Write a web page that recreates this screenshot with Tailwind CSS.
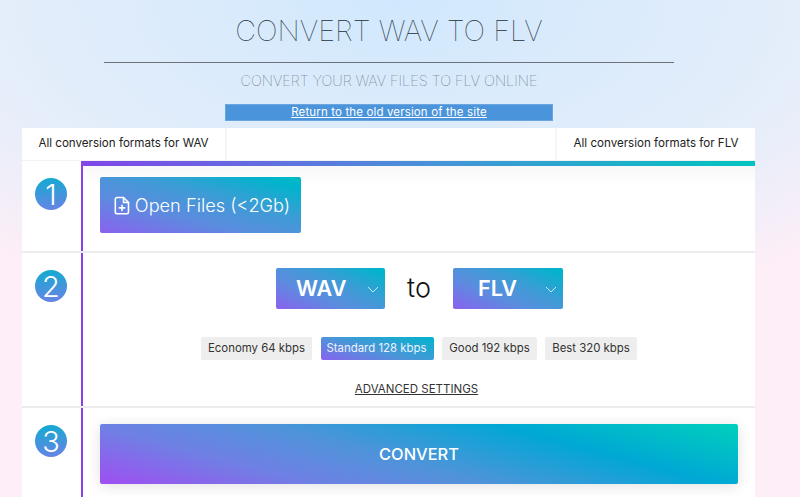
<!DOCTYPE html>
<html lang="en">

<head>
    <meta charset="UTF-8">
    <meta name="viewport" content="width=device-width, initial-scale=1.0">
    <title>Convert WAV to FLV</title>
    <script src="https://cdn.jsdelivr.net/npm/@tailwindcss/browser@4"></script>
</head>

<body class="h-[497px] overflow-hidden bg-[#fdf3f9] bg-[radial-gradient(ellipse_620px_330px_at_50%_0,#d0e8fd_0%,#e6eefa_70%,#fdeef7_100%)] bg-no-repeat font-['Inter','Liberation_Sans',sans-serif]">
    <div class="w-[800px]">
        <!-- Header -->
        <header class="flex w-[778px] flex-col items-center pt-[13px]">
            <h1 class="h-[36px] text-[28.8px] leading-[36px] font-thin text-[#25303a]">CONVERT WAV TO FLV</h1>
            <div class="mt-[13px] h-px w-[570px] bg-[#6b7378]"></div>
            <p class="mt-[9px] h-[18px] text-[14.5px] leading-[18px] font-thin text-[#3c474f]">CONVERT YOUR WAV FILES TO FLV ONLINE</p>
            <div class="mt-[14px] flex h-[17px] w-[328px] items-center justify-center border border-[#6aa5e0] bg-[#4a94db]">
                <a href="#" class="text-[11.5px] leading-[15px] tracking-[0.14px] text-white underline">Return to the old version of the site</a>
            </div>
        </header>

        <!-- Converter card -->
        <main class="mt-[7px] ml-[22px] w-[733px] bg-white">
            <div class="flex h-[33px] items-center justify-between border-b border-[#f2f2f2] text-[11.6px] text-[#222]">
                <a href="#" class="flex h-full w-[205px] items-center justify-center border-r-2 border-[#f5f5f5]">All conversion formats for WAV</a>
                <a href="#" class="flex h-full w-[200px] items-center justify-center border-l-2 border-[#f5f5f5]">All conversion formats for FLV</a>
            </div>

            <!-- Step 1 -->
            <section class="flex h-[92px] border-b-2 border-[#ececec]">
                <div class="flex w-[59px] shrink-0 justify-center pt-[17px] pr-[1px]">
                    <span class="flex h-[32px] w-[32px] items-center justify-center rounded-full bg-[linear-gradient(175deg,#10acd0,#6a82e6)] text-[29px] leading-none font-light text-white">1</span>
                </div>
                <div class="flex-1 border-l-2 border-[#8a40ea]">
                    <div class="h-[5px] bg-[linear-gradient(90deg,#8046e8,#4a90d9_50%,#00c4c0)]"></div>
                    <div class="bg-[linear-gradient(#f8f8f8,#ffffff_18px)] pt-[11px] pl-[17px]">
                        <button class="flex h-[56px] w-[201px] items-center justify-center gap-[5px] rounded-[2px] bg-[linear-gradient(15deg,#8a62ee_0%,#5b8cdf_35%,#3f9bd6_60%,#00b4cc_90%,#00bcc4_100%)] pt-px pl-[3px] text-[18.2px] font-light text-white">
                            <svg width="16" height="19" viewBox="0 0 16 19" fill="none" stroke="white" stroke-width="1.6" stroke-linejoin="round" stroke-linecap="round">
                                <path d="M3 1.5h6.5l5 5v9.5a1.7 1.7 0 0 1-1.7 1.7H3A1.7 1.7 0 0 1 1.3 16V3.2A1.7 1.7 0 0 1 3 1.5z" />
                                <path d="M9.5 1.5v5h5" />
                                <path d="M8 9.2v5.4M5.3 11.9h5.4" />
                            </svg>
                            Open Files (&lt;2Gb)
                        </button>
                    </div>
                </div>
            </section>

            <!-- Step 2 -->
            <section class="flex h-[155px] border-b-2 border-[#ececec]">
                <div class="flex w-[59px] shrink-0 justify-center pt-[17px] pr-[1px]">
                    <span class="flex h-[32px] w-[32px] items-center justify-center rounded-full bg-[linear-gradient(175deg,#10acd0,#6a82e6)] text-[29px] leading-none font-light text-white">2</span>
                </div>
                <div class="flex flex-1 flex-col items-center border-l-2 border-[#8a40ea] pt-[15px]">
                    <div class="flex items-center">
                        <button class="relative ml-px flex h-[41px] w-[109px] items-center rounded-[2px] bg-[linear-gradient(25deg,#8a62ee_0%,#5b8cdf_35%,#3f9bd6_60%,#00b4cc_95%)] pl-[20px] text-[21.6px] font-semibold text-white">
                            WAV
                            <svg class="absolute top-[18px] right-[6px]" width="12" height="7" viewBox="0 0 12 7" fill="none" stroke="#cfe4f7" stroke-width="1"><path d="M1 1l5 5 5-5" /></svg>
                        </button>
                        <span class="w-[68px] text-center text-[27px] font-light text-[#111]">to</span>
                        <button class="relative flex h-[41px] w-[110px] items-center rounded-[2px] bg-[linear-gradient(25deg,#8a62ee_0%,#5b8cdf_35%,#3f9bd6_60%,#00b4cc_95%)] pl-[25px] text-[21.6px] font-semibold text-white">
                            FLV
                            <svg class="absolute top-[18px] right-[6px]" width="12" height="7" viewBox="0 0 12 7" fill="none" stroke="#cfe4f7" stroke-width="1"><path d="M1 1l5 5 5-5" /></svg>
                        </button>
                    </div>
                    <div class="mt-[28px] flex gap-[8px] text-[11.4px] leading-[23px] text-[#333]">
                        <button class="mr-px h-[23px] w-[111px] rounded-[2px] bg-[#eeeeee]">Economy 64 kbps</button>
                        <button class="h-[23px] w-[113px] rounded-[2px] bg-[linear-gradient(15deg,#8a62ee_0%,#4b95d9_45%,#00b4cc_100%)] pr-[2px] text-[#eef4ff]">Standard 128 kbps</button>
                        <button class="h-[23px] w-[95px] rounded-[2px] bg-[#eeeeee]">Good 192 kbps</button>
                        <button class="h-[23px] w-[92px] rounded-[2px] bg-[#eeeeee]">Best 320 kbps</button>
                    </div>
                    <a href="#" class="mt-[22px] mr-[5px] text-[11.5px] leading-[15px] text-[#333] underline">ADVANCED SETTINGS</a>
                </div>
            </section>

            <!-- Step 3 -->
            <section class="flex h-[90px]">
                <div class="flex w-[59px] shrink-0 justify-center pt-[17px] pr-[1px]">
                    <span class="flex h-[32px] w-[32px] items-center justify-center rounded-full bg-[linear-gradient(175deg,#10acd0,#6a82e6)] text-[29px] leading-none font-light text-white">3</span>
                </div>
                <div class="flex-1 border-l-2 border-[#8a40ea] pt-[16px] pl-[17px]">
                    <button class="h-[60px] w-[638px] rounded-[2px] bg-[linear-gradient(15deg,#a04ef2_0%,#6f80e4_25%,#4f93da_45%,#00a8d4_72%,#00d0bc_100%)] text-[16.4px] font-medium text-white shadow-[0_2px_14px_rgba(0,0,0,0.12)]">CONVERT</button>
                </div>
            </section>
        </main>
    </div>
</body>

</html>
